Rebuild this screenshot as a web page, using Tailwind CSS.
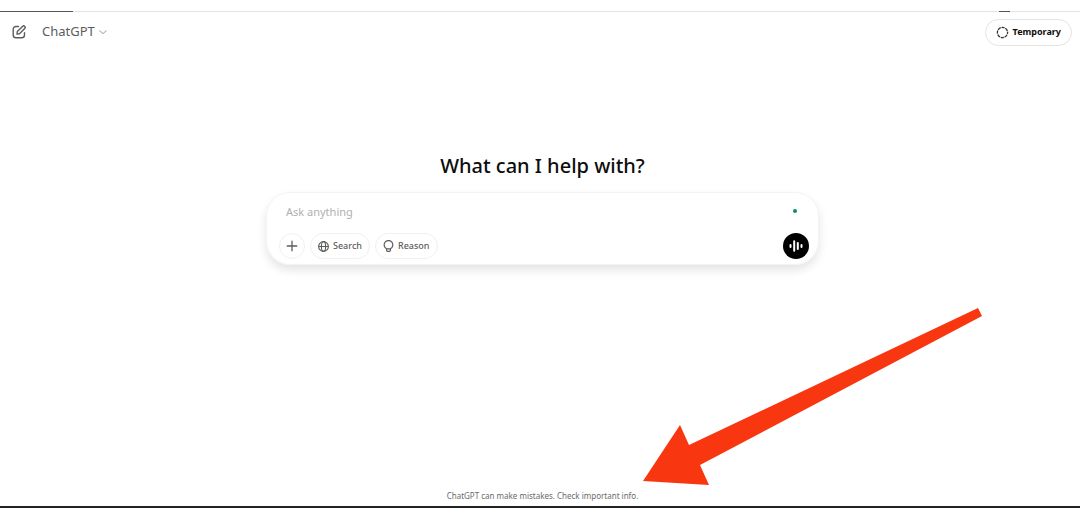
<!DOCTYPE html>
<html lang="en">
<head>
    <meta charset="UTF-8">
    <meta name="viewport" content="width=device-width, initial-scale=1.0">
    <title>ChatGPT</title>
    <script src="https://cdn.jsdelivr.net/npm/@tailwindcss/browser@4"></script>
</head>
<body class="relative flex min-h-screen flex-col border-b-2 border-[#222] bg-white font-['Noto_Sans','Open_Sans',sans-serif] text-[#0d0d0d]">

    <!-- Browser edge -->
    <div class="mt-[11px] flex h-px justify-between bg-[#e3e3e3]">
        <div class="w-[73px] bg-[#555]"></div>
        <div class="mr-[70px] w-[11px] bg-[#555]"></div>
    </div>

    <!-- Header -->
    <header class="flex h-10 items-center justify-between pr-2 pl-3">
        <div class="flex items-center gap-4 text-[#5d5d5d]">
            <button type="button" aria-label="New chat">
                <svg class="size-[14px]" viewBox="0 0 14 14" fill="none" stroke="currentColor" stroke-width="1.4" stroke-linecap="round" stroke-linejoin="round">
                    <path d="M6.5 1.5H4A2.8 2.8 0 0 0 1.2 4.3V10A2.8 2.8 0 0 0 4 12.8H9.7A2.8 2.8 0 0 0 12.5 10V7.8"/>
                    <path d="M5 9.1L5.3 6.6L10.5 1.4A1.4 1.4 0 0 1 12.7 3.6L7.5 8.8Z"/>
                </svg>
            </button>
            <button type="button" class="flex items-center gap-1 text-[13px]">
                ChatGPT
                <svg class="size-2 text-[#b4b4b4]" viewBox="0 0 10 10" fill="none" stroke="currentColor" stroke-width="1.4" stroke-linecap="round" stroke-linejoin="round">
                    <path d="M1 3.5L5 7L9 3.5"/>
                </svg>
            </button>
        </div>
        <button type="button" class="flex h-[27px] items-center gap-1 rounded-full border border-[#e3e3e3] px-[10px] text-[9px] font-bold">
            <svg class="size-[13px]" viewBox="0 0 13 13" fill="none" stroke="#333" stroke-width="1.3">
                <circle cx="6.5" cy="6.5" r="5.1" stroke-dasharray="3.2 .8" stroke-dashoffset="1.6"/>
            </svg>
            Temporary
        </button>
    </header>

    <!-- Prompt -->
    <main class="flex grow flex-col items-center pt-25 pl-[5px]">
        <h1 class="text-[20px] leading-7 font-medium">What can I help with?</h1>
        <form class="mt-3 w-full max-w-[553px] rounded-3xl border border-[#f3f3f3] px-3 pt-[9px] pb-[5px] shadow-[0_5px_10px_rgba(0,0,0,0.11)]">
            <div class="flex items-center pr-[9px] pl-[7px]">
                <input type="text" aria-label="Ask anything" placeholder="Ask anything" class="h-[18px] grow text-[11px] outline-none placeholder:text-[#b0b0b0]">
                <span class="size-1 rounded-full bg-[#0b8f6a]"></span>
            </div>
            <div class="mt-[13px] -mr-[3px] flex items-center gap-[5px] text-[9px] font-medium text-[#5d5d5d]">
                <button type="button" aria-label="Add" class="flex size-[26px] items-center justify-center rounded-full border border-[#f0f0f0]">
                    <svg class="size-3" viewBox="0 0 12 12" fill="none" stroke="currentColor" stroke-width="1.3" stroke-linecap="round">
                        <path d="M6 1.2V10.8M1.2 6H10.8"/>
                    </svg>
                </button>
                <button type="button" class="flex h-[26px] items-center gap-1 rounded-full border border-[#f0f0f0] px-[7px]">
                    <svg class="size-[11px]" viewBox="0 0 11 11" fill="none" stroke="currentColor" stroke-width="1.1">
                        <circle cx="5.5" cy="5.5" r="4.9"/>
                        <ellipse cx="5.5" cy="5.5" rx="2.1" ry="4.9"/>
                        <path d="M.6 5.5H10.4"/>
                    </svg>
                    Search
                </button>
                <button type="button" class="flex h-[26px] items-center gap-1 rounded-full border border-[#f0f0f0] px-[7px]">
                    <svg class="h-3 w-[11px]" viewBox="0 0 11 12" fill="none" stroke="currentColor" stroke-width="1.2" stroke-linecap="round" stroke-linejoin="round">
                        <path d="M3.6 8.7A4.3 4.3 0 1 1 7.4 8.7V10.2Q7.4 11.3 6.3 11.3H4.7Q3.6 11.3 3.6 10.2ZM3.6 8.9H7.4"/>
                    </svg>
                    Reason
                </button>
                <button type="button" aria-label="Use voice mode" class="ml-auto flex size-[26px] items-center justify-center rounded-full bg-black text-white">
                    <svg class="size-[14px]" viewBox="0 0 14 14" fill="none" stroke="currentColor" stroke-width="2" stroke-linecap="round">
                        <path d="M1.5 6.1V7.9M5.2 2.3V11.7M8.8 4V10M12.5 6.1V7.9"/>
                    </svg>
                </button>
            </div>
        </form>
    </main>

    <footer class="py-1 pl-[5px] text-center text-[8px] leading-3 text-[#6b6b6b]">ChatGPT can make mistakes. Check important info.</footer>

    <!-- Arrow over the page -->
    <svg class="pointer-events-none absolute right-[98px] bottom-[21px] h-[177px] w-[339px]" viewBox="0 0 339 177" fill="#f83610" aria-hidden="true">
        <path d="M0 173L37 117L46 137L335 0L339 8L57 157L66 177Z"/>
    </svg>
</body>
</html>
